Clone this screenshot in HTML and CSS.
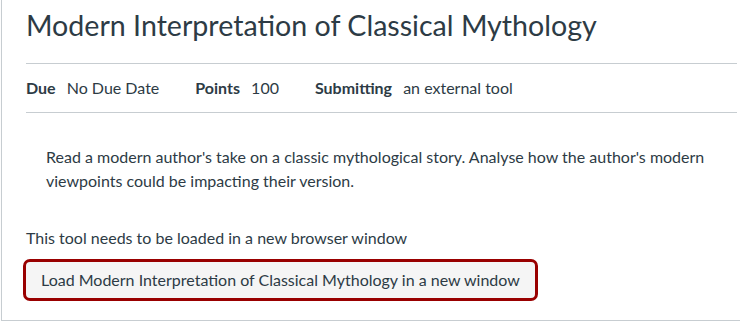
FILE: index.html
```html
<!DOCTYPE html>
<html lang="en">
<head>
  <meta charset="UTF-8">
  <title>Modern Interpretation of Classical Mythology</title>
  <link rel="stylesheet" href="styles.css">
</head>
<body>
  <div class="card">
    <h1 class="title">Modern Interpretation of Classical Mythology</h1>

    <ul class="details">
      <li><span class="label">Due</span> No Due Date</li>
      <li><span class="label">Points</span> 100</li>
      <li><span class="label">Submitting</span> an external tool</li>
    </ul>

    <div class="description">
      <p>Read a modern author's take on a classic mythological story. Analyse how the author's modern viewpoints could be impacting their version.</p>
    </div>

    <p class="tool-note">This tool needs to be loaded in a new browser window</p>
    <button class="load-btn">Load Modern Interpretation of Classical Mythology in a new window</button>
  </div>
</body>
</html>
```

FILE: styles.css
```css
body {
  font-family: 'Lato', sans-serif;
  margin: 0;
  padding: 0;
  background-color: #ffffff;
  color: #2d3b45;
}

.card {
  width: 711px;
  margin-left: 1px;
  padding: 0 12px 19px 24px;
  border: 1px solid #c7cdd1;
  border-top: none;
  box-shadow: 1px 1px 2px rgba(0, 0, 0, 0.15);
}

.title {
  margin: 0;
  padding-top: 5px;
  padding-bottom: 18px;
  font-size: 28.6px;
  font-weight: 400;
  line-height: 40px;
  border-bottom: 1px solid #c7cdd1;
}

.details {
  list-style: none;
  margin: 0;
  padding: 13px 0;
  display: flex;
  gap: 36px;
  font-size: 16px;
  line-height: 22px;
  border-bottom: 1px solid #c7cdd1;
}

.label {
  font-weight: 700;
  margin-right: 7px;
}

.description {
  padding: 32px 0 0 20px;
  font-size: 16px;
  line-height: 24px;
}

.description p {
  margin: 0;
}

.tool-note {
  margin: 33px 0 9px;
  font-size: 16px;
  line-height: 24px;
}

.load-btn {
  margin-left: -3px;
  padding: 6px 15px;
  font-family: 'Lato', sans-serif;
  font-size: 16px;
  line-height: 24px;
  color: #2d3b45;
  background: #f5f5f5;
  border: 3px solid #990000;
  border-radius: 7px;
  cursor: pointer;
}
```
